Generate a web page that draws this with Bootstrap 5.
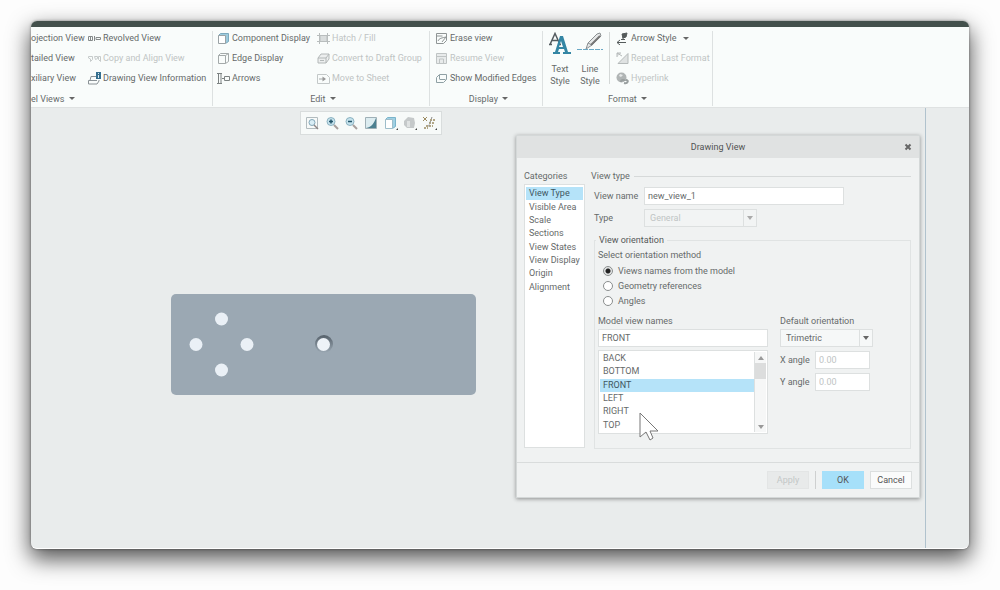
<!DOCTYPE html>
<html lang="en">
<head>
<meta charset="utf-8">
<meta name="viewport" content="width=device-width, initial-scale=1">
<title>Drawing View</title>
<link href="https://cdn.jsdelivr.net/npm/bootstrap@5.3.0/dist/css/bootstrap.min.css" rel="stylesheet">
<script src="https://cdn.jsdelivr.net/npm/bootstrap@5.3.0/dist/js/bootstrap.bundle.min.js"></script>
<style>
  :root { --ink:#666a6a; --dim:#bfc4c4; --sel:#b5e3f9; --edge:#dde0e0; }
  body { background:#fdfdfd; color:var(--ink); font-family:Roboto,"Open Sans",sans-serif; font-size:9px; line-height:14px; padding:21px 31px 41px; }
  button, input, select, legend { font:inherit; color:inherit; }
  svg { flex:none; display:block; }
  .app-window { background:#e9ecec; border-radius:6px; overflow:hidden; border-bottom:1px solid #fff; box-shadow:0 9px 22px 1px rgba(0,0,0,.68), 0 0 3px rgba(0,0,0,.4); }
  .app-top { height:6px; background:#43504c; }
  .ribbon { background:#f9fcfb; border-bottom:1px solid #dfe2e2; height:81px; }
  .ribbon-group { border-right:1px solid #dde1e1; margin:4px 0 1px; }
  .ribbon-group:last-child { width:170px; }
  .cmds { height:60px; margin-top:-3px; }
  .cmd { height:20px; padding:0; border:0; background:none; display:flex; align-items:center; gap:2px; white-space:nowrap; }
  .cmd:disabled { color:var(--dim); }
  .cmd svg { width:13px; height:13px; }
  .big-cmds { padding-left:2px; }
  .big-cmd { flex:none; padding:4px 0 1px; border:0; background:none; line-height:12px; width:30px; }
  .caption-btn { padding:0; border:0; background:none; line-height:14px; }
  .caret { display:inline-block; border:3px solid transparent; border-top-color:#666; border-bottom:0; vertical-align:2px; margin-left:2px; }
  .g-views { width:182px; } .g-views .first { width:57px; }
  .g-edit { width:217px; padding-left:4px; } .g-edit .first { width:100px; }
  .g-show { width:113px; padding-left:5px; }
  .big-rule { margin:4px 6px 4px 4px; }
  .canvas-area { min-height:440px; }
  .sheet-edge { right:43px; width:1px; background:#b0c2cd; }
  .view-tools { left:269px; top:3px; width:142px; height:24px; background:#f7faf9; border:1px solid #d9dddd; padding:0 3px; }
  .view-tools button { padding:0; border:0; background:none; width:16px; }
  .part { left:139px; top:185px; }
  .dlg { left:485px; top:27px; width:404px; background:#f0f2f2; border:1px solid #d4d8d8; box-shadow:0 1px 4px rgba(0,0,0,.4); }
  .dlg-title { height:22px; background:#e0e2e2; color:#505252; }
  .dlg-title button { padding:0; border:0; background:none; right:7px; top:5px; }
  .dlg-body { padding:11px 8px 13px 7px; gap:6px; }
  .cats { width:61px; height:264px; background:#fff; border:1px solid var(--edge); padding:2px 1px; margin-top:1px; }
  .rows { display:grid; grid-auto-rows:1fr; }
  .cats .rows { height:107px; }
  .rows button { border:0; background:none; padding:0 3px; text-align:left; line-height:13px; white-space:nowrap; overflow:hidden; }
  .rows .chosen { background:var(--sel); color:#3f5661; }
  .rule { height:1px; background:#d6d9d9; }
  .field { height:18px; border:1px solid var(--edge); background:#fff; padding:0 3px; border-radius:0; min-width:0; outline:0; }
  .field:disabled { color:#c0c4c4; opacity:1; }
  select.field { appearance:none; padding:0 5px; background:#f6f8f8 url("data:image/svg+xml,%3Csvg xmlns='http://www.w3.org/2000/svg' width='13' height='16'%3E%3Cpath d='M.5 0v16' stroke='%23dde0e0'/%3E%3Cpath d='M4 6h6L7 10z' fill='%23666'/%3E%3C/svg%3E") right center no-repeat; }
  select.field:disabled { background-color:#f2f4f4; background-image:url("data:image/svg+xml,%3Csvg xmlns='http://www.w3.org/2000/svg' width='13' height='16'%3E%3Cpath d='M.5 0v16' stroke='%23dde0e0'/%3E%3Cpath d='M4 6h6L7 10z' fill='%23aaa'/%3E%3C/svg%3E"); }
  .form-row { display:flex; align-items:center; padding-left:3px; margin-top:4px; }
  .w-name { width:200px; } .w-type { width:113px; } .w-ori { width:93px; } .w-ang { width:55px; }
  .lbl { width:50px; } .ang-lbl { width:35px; }
  .orient { border:1px solid #e0e3e3; margin:13px 0 0 3px; height:209px; padding:7px 3px 0; }
  .orient legend { line-height:14px; width:auto; background:#f0f2f2; top:-8px; left:1px; padding:0 3px; color:#555858; }
  .methods { margin:1px 0 6px; }
  .pick { height:15px; gap:5px; padding-left:5px; }
  .pick input { appearance:none; width:10px; height:10px; margin:0; border:1px solid #8a8e8e; border-radius:50%; background:#fff; }
  .pick input:checked { background:radial-gradient(circle,#222 0 2px,#e2e4e4 3px); }
  .lists { gap:12px; }
  .lists label { display:block; }
  .stack-lbl { margin-bottom:1px; }
  .listbox { height:84px; border:1px solid var(--edge); background:#fff; padding:1px; margin-top:3px; }
  .listbox .rows { height:80px; }
  .sbar { width:12px; background:#f6f7f7; border-left:1px solid var(--edge); }
  .sbar button { border:0; padding:0; background:#f6f7f7; height:11px; display:grid; place-items:center; }
  .sbar .thumb { height:16px; background:#dcdddd; }
  .mv { width:170px; }
  .dlg-foot { border-top:1px solid #d9dcdc; padding:8px 7px; gap:6px; height:35px; }
  .dlg-foot .btn { --bs-btn-font-size:9px; --bs-btn-line-height:14px; --bs-btn-border-radius:0; --bs-btn-padding-x:0; --bs-btn-padding-y:1px; --bs-btn-color:#555; --bs-btn-bg:#fafbfb; --bs-btn-border-color:#dcdfdf; width:42px; font-family:inherit; }
  .dlg-foot .ok { --bs-btn-bg:#a6e0fa; --bs-btn-border-color:#a6e0fa; }
  .dlg-foot .btn:disabled { color:#c3c7c7; background:#e8eaea; border-color:#e3e5e5; opacity:1; }
  .pointer { left:608px; top:304px; }
</style>
</head>
<body>
<main class="app-window">
  <div class="app-top"></div>
  <div class="ribbon d-flex">
    <section class="ribbon-group g-views d-flex flex-column justify-content-between">
      <div class="cmds d-flex">
        <div class="first">
          <button class="cmd">ojection View</button>
          <button class="cmd">tailed View</button>
          <button class="cmd">xiliary View</button>
        </div>
        <div>
          <button class="cmd"><svg viewBox="0 0 13 13" fill="none" stroke="#858a8a"><path d="M.5 4.500h4v4h-4zM2.500 4v5M6.500 4v5M8 5.500h4.500v2H8z"/></svg>Revolved View</button>
          <button class="cmd" disabled><svg viewBox="0 0 13 13" fill="none" stroke="#c6cbcb"><path d="M.5 4.500h4v3L2.500 9.500V7l-2-1zM6.500 4.500h3v2l-2 1zM10.500 4.500h2v5l-2-2z"/></svg>Copy and Align View</button>
          <button class="cmd"><svg viewBox="0 0 13 13" fill="none" stroke="#8b9296"><path d="M8 4.500H3l-1 4h7M2 8.500H.5v3.500H9l2-3V8"/><path d="M8 0h5v7H8z" fill="#356f8f" stroke="none"/><path d="M10.500 1v1M10.500 3v3" stroke="#dbe9f0"/></svg>Drawing View Information</button>
        </div>
      </div>
      <div><button class="caption-btn">el Views <i class="caret"></i></button></div>
    </section>
    <section class="ribbon-group g-edit d-flex flex-column justify-content-between">
      <div class="cmds d-flex">
        <div class="first">
          <button class="cmd"><svg viewBox="0 0 13 13"><path d="M1.500 3.500l2-2h8v8l-3 2" fill="#9dcbdd" stroke="#7ba9bd"/><path d="M1.500 3.500h7v8h-7z" fill="#fff" stroke="#9aa2a5"/></svg>Component Display</button>
          <button class="cmd"><svg viewBox="0 0 13 13" fill="none" stroke="#a4aaaa"><path d="M1.500 3.500h7v8h-7zM1.500 3.500l2-2h8v8l-3 2M8.500 3.500l3-2"/></svg>Edge Display</button>
          <button class="cmd"><svg viewBox="0 0 13 13" fill="none" stroke="#7c8282"><path d="M0 1.500h5M0 11.500h5M1.500 2v9M4 2v9M7.500 4.500h5v4h-5zM5 6.500h2"/></svg>Arrows</button>
        </div>
        <div>
          <button class="cmd" disabled><svg viewBox="0 0 13 13" fill="#d9dddd" stroke="#b8bdbd"><path d="M3 3.500h7v6H3zM2.500 1v11M10.500 1v11M0 3.500h13M0 9.500h13"/></svg>Hatch / Fill</button>
          <button class="cmd" disabled><svg viewBox="0 0 13 13" fill="#eceeee" stroke="#b3b8b8"><path d="M1 6l3-4h8v5l-3 4H1zM1 6h8v5M9 6l3-4M3 8.500h4"/></svg>Convert to Draft Group</button>
          <button class="cmd" disabled><svg viewBox="0 0 13 13" fill="none" stroke="#c3c8c8"><path d="M.5 2.500h9l3 3v6H.5z"/><path d="M2 7h4" stroke="#a5aaaa"/><path d="M5.500 4.500L9 7 5.500 9.500z" fill="#999" stroke="none"/></svg>Move to Sheet</button>
        </div>
      </div>
      <div class="text-center"><button class="caption-btn">Edit <i class="caret"></i></button></div>
    </section>
    <section class="ribbon-group g-show d-flex flex-column justify-content-between">
      <div class="cmds">
        <button class="cmd"><svg viewBox="0 0 13 13" fill="none" stroke="#8f9595"><path d="M1.500 1.500h10v7l-3 3h-7zM1.500 4h6M3 9c1-3 4-3 8-4M7 10l4-5"/></svg>Erase view</button>
        <button class="cmd" disabled><svg viewBox="0 0 13 13" fill="#e8ebeb" stroke="#bfc4c4"><path d="M1.500 1.500h10v10h-10zM1.500 4.500h10M4.500 11V7h4v4"/></svg>Resume View</button>
        <button class="cmd"><svg viewBox="0 0 13 13" fill="none" stroke="#8fa0a4"><path d="M1.500 5.500l3-3h7v5l-3 3h-7zM4.500 3v4M4.500 7.500h6"/></svg>Show Modified Edges</button>
      </div>
      <div class="text-center"><button class="caption-btn">Display <i class="caret"></i></button></div>
    </section>
    <section class="ribbon-group d-flex flex-column justify-content-between">
      <div class="cmds big-cmds d-flex">
        <button class="big-cmd d-flex flex-column align-items-center justify-content-between"><svg width="22" height="24" viewBox="0 0 22 24"><path d="M1 12.500L6 1.500l5 11M3 8.500h6M0 12.500h3M9 12.500h3" fill="none" stroke="#555c60" stroke-width="1.500"/><path d="M11 4h3l5 16h3v2h-8v-2h2l-1-3h-5l-1 3h2v2H4v-2h2zM12 9l-2 6h4z" fill="#3486a4" fill-rule="evenodd"/></svg><span>Text<br>Style</span></button>
        <button class="big-cmd d-flex flex-column align-items-center justify-content-between"><svg width="26" height="24" viewBox="0 0 26 24"><path d="M0 17.500h26" stroke="#6aa8c5" stroke-dasharray="5 1"/><path d="M9 17l2-6L20 2l3-1 1 3-9 9zM11 11l4 2" fill="#e6e8e8" stroke="#8b9092"/><path d="M23 4l-9 9" stroke="#777" stroke-width="2"/></svg><span>Line<br>Style</span></button>
        <div class="vr big-rule"></div>
        <div>
          <button class="cmd"><svg viewBox="0 0 13 13" fill="none" stroke="#555b5b"><path d="M1 10.500h9M4 8l-3 2.500L4 13M5 7.500h4M7 2v5"/><path d="M6 2l5-1-1 4-3 1z" fill="#555b5b"/></svg>Arrow Style <i class="caret ms-1"></i></button>
          <button class="cmd" disabled><svg viewBox="0 0 13 13" fill="#dfe2e2" stroke="#b5baba"><path d="M2 11.500L12 1.500v10zM1 1l5 3M1 5V1h4"/></svg>Repeat Last Format</button>
          <button class="cmd" disabled><svg viewBox="0 0 13 13"><circle cx="5.500" cy="5.500" r="5" fill="#b0b5b5"/><path d="M4 2l3 1-2 2-2-1z" fill="#e5e8e8"/><path d="M5 10c0-3 4-2 4-1M8 11c4 1 5-3 2-3" fill="none" stroke="#999f9f" stroke-width="2"/></svg>Hyperlink</button>
        </div>
      </div>
      <div class="text-center"><button class="caption-btn">Format <i class="caret"></i></button></div>
    </section>
  </div>

  <div class="canvas-area position-relative">
    <div class="sheet-edge position-absolute top-0 bottom-0"></div>
    <div class="view-tools position-absolute d-flex align-items-center justify-content-between" role="toolbar" aria-label="View tools">
      <button aria-label="Refit"><svg width="16" height="16" viewBox="0 0 16 16" fill="none"><path d="M2.500 2.500h11v11h-11z" stroke="#b3bcbf"/><circle cx="8" cy="7.500" r="3" fill="#d9eef6" stroke="#84a8b8"/><path d="M10 10l4 4" stroke="#8e8585" stroke-width="1.500"/></svg></button>
      <button aria-label="Zoom in"><svg width="16" height="16" viewBox="0 0 16 16" fill="none"><circle cx="7" cy="6.500" r="4" fill="#c5e2ec" stroke="#8db3c2"/><path d="M5 6.500h4M7 4.500v4" stroke="#225469" stroke-width="1.500"/><path d="M10 10l4 4" stroke="#a89f9d" stroke-width="2"/></svg></button>
      <button aria-label="Zoom out"><svg width="16" height="16" viewBox="0 0 16 16" fill="none"><circle cx="7" cy="6.500" r="4" fill="#c5e2ec" stroke="#8db3c2"/><path d="M5 6.500h4" stroke="#225469" stroke-width="1.500"/><path d="M10 10l4 4" stroke="#a89f9d" stroke-width="2"/></svg></button>
      <button aria-label="Repaint"><svg width="16" height="16" viewBox="0 0 16 16"><path d="M2.500 2.500h11v11h-11z" fill="#dcecf0" stroke="#9fb0b7"/><path d="M13 3v10H3c6-1 8-5 10-10z" fill="#4c8090"/></svg></button>
      <button aria-label="Display style"><svg width="16" height="16" viewBox="0 0 16 16"><path d="M2.500 4.500l2-2h8v9l-3 2" fill="#9fd0e3" stroke="#7ab4cb"/><path d="M2.500 4.500h7v9h-7z" fill="#fff" stroke="#9dbdca"/><path d="M13 15h2v-2z" fill="#444"/></svg></button>
      <button aria-label="Saved orientations"><svg width="16" height="16" viewBox="0 0 16 16"><path d="M2 6l4-4 6 1 1 5-1 5H5L2 10z" fill="#c5c9ca"/><path d="M5 6h3v6H5z" fill="#dfe2e2"/><path d="M13 15h2v-2z" fill="#444"/></svg></button>
      <button aria-label="Datum display"><svg width="16" height="16" viewBox="0 0 16 16" stroke="#9b8b62" fill="none"><path d="M1 2l4 4M5 2L1 6"/><path d="M8 5h5M7 8h6M4 11h7M2 13h4" stroke-dasharray="2 1" stroke-width="1.500"/><path d="M10 2l-4 11" stroke="#888" stroke-dasharray="2 2"/><path d="M13 15h2v-2z" fill="#444" stroke="none"/></svg></button>
    </div>

    <svg class="part position-absolute" width="307" height="103" viewBox="0 0 307 103">
      <rect x="1" y="1" width="305" height="101" rx="5" fill="#9ba8b3"/>
      <g fill="#eaf0f6"><circle cx="51.500" cy="26" r="6.500"/><circle cx="26" cy="51.500" r="6.500"/><circle cx="77" cy="51.500" r="6.500"/><circle cx="51.500" cy="77" r="6.500"/></g>
      <defs><linearGradient id="bore" x1="0" y1="0" x2="0" y2="1"><stop offset="0" stop-color="#56616b"/><stop offset="1" stop-color="#9ba8b3"/></linearGradient></defs>
      <circle cx="154" cy="51" r="9" fill="url(#bore)"/><circle cx="153.500" cy="51.500" r="6.500" fill="#eef3f8"/>
    </svg>

    <div class="dlg position-absolute" role="dialog" aria-labelledby="dlgTitle">
      <div class="dlg-title position-relative d-flex align-items-center justify-content-center">
        <span id="dlgTitle">Drawing View</span>
        <button class="position-absolute" aria-label="Close"><svg width="8" height="12" viewBox="0 0 8 12"><path d="M1.500 3.500l5 5M6.500 3.500l-5 5" stroke="#666" stroke-width="2"/></svg></button>
      </div>
      <div class="dlg-body d-flex">
        <div>
          <div id="catLabel">Categories</div>
          <div class="cats" role="group" aria-labelledby="catLabel">
            <div class="rows">
              <button class="chosen">View Type</button><button>Visible Area</button><button>Scale</button><button>Sections</button><button>View States</button><button>View Display</button><button>Origin</button><button>Alignment</button>
            </div>
          </div>
        </div>
        <div class="flex-grow-1">
          <div class="d-flex align-items-center gap-1">View type<div class="rule flex-grow-1"></div></div>
          <div class="form-row"><label class="lbl" for="vname">View name</label><input class="field w-name" id="vname" value="new_view_1"></div>
          <div class="form-row"><label class="lbl" for="vtype">Type</label><select class="field w-type" id="vtype" disabled><option>General</option></select></div>
          <fieldset class="orient position-relative">
            <legend class="position-absolute mb-0">View orientation</legend>
            <div>Select orientation method</div>
            <div class="methods">
              <label class="pick d-flex align-items-center"><input type="radio" name="method" checked>Views names from the model</label>
              <label class="pick d-flex align-items-center"><input type="radio" name="method">Geometry references</label>
              <label class="pick d-flex align-items-center"><input type="radio" name="method">Angles</label>
            </div>
            <div class="lists d-flex">
              <div class="mv">
                <label class="stack-lbl" for="mview">Model view names</label>
                <input class="field w-100 d-block" id="mview" value="FRONT">
                <div class="listbox d-flex">
                  <div class="rows flex-grow-1">
                    <button>BACK</button><button>BOTTOM</button><button class="chosen">FRONT</button><button>LEFT</button><button>RIGHT</button><button>TOP</button>
                  </div>
                  <div class="sbar d-flex flex-column">
                    <button aria-label="Scroll up"><svg width="6" height="4"><path d="M0 4h6L3 0z" fill="#999"/></svg></button>
                    <div class="thumb"></div>
                    <button class="mt-auto" aria-label="Scroll down"><svg width="6" height="4"><path d="M0 0h6L3 4z" fill="#999"/></svg></button>
                  </div>
                </div>
              </div>
              <div>
                <label class="stack-lbl" for="dori">Default orientation</label>
                <select class="field d-block w-ori" id="dori"><option>Trimetric</option></select>
                <div class="d-flex align-items-center mt-1"><label class="ang-lbl" for="xa">X angle</label><input class="field w-ang" id="xa" value="0.00" disabled></div>
                <div class="d-flex align-items-center mt-1"><label class="ang-lbl" for="ya">Y angle</label><input class="field w-ang" id="ya" value="0.00" disabled></div>
              </div>
            </div>
          </fieldset>
        </div>
      </div>
      <div class="dlg-foot d-flex justify-content-end">
        <button class="btn" disabled>Apply</button><div class="vr"></div><button class="btn ok">OK</button><button class="btn">Cancel</button>
      </div>
    </div>
    <svg class="pointer position-absolute" width="20" height="30" viewBox="0 0 20 30"><path d="M1 1v24l6-5 4 8 3-2-3-7h8z" fill="#fff" stroke="#777"/></svg>
  </div>
</main>
</body>
</html>
